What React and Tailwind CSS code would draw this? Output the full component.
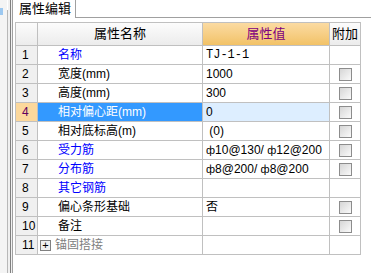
import React from "react";

const FONT = { fontFamily: '"Liberation Sans", "Noto Sans CJK SC", sans-serif' };

const rows = [
  { no: "1", name: "名称", color: "text-[#0000ff]", value: "TJ-1-1", check: false, mono: true },
  { no: "2", name: "宽度(mm)", color: "text-black", value: "1000", check: true },
  { no: "3", name: "高度(mm)", color: "text-black", value: "300", check: true },
  { no: "4", name: "相对偏心距(mm)", color: "text-white", value: "0", check: true, selected: true },
  { no: "5", name: "相对底标高(m)", color: "text-black", value: " (0)", check: true },
  { no: "6", name: "受力筋", color: "text-[#0000ff]", value: "⏀10@130/ ⏀12@200", check: true, bar: true },
  { no: "7", name: "分布筋", color: "text-[#0000ff]", value: "⏀8@200/ ⏀8@200", check: true, bar: true },
  { no: "8", name: "其它钢筋", color: "text-[#0000ff]", value: "", check: false },
  { no: "9", name: "偏心条形基础", color: "text-black", value: "否", check: true },
  { no: "10", name: "备注", color: "text-black", value: "", check: true },
  { no: "11", name: "锚固搭接", color: "text-[#808080]", value: "", check: false, plus: true },
];

function Checkbox() {
  return (
    <div className="w-[13px] h-[13px] border border-[#8c8c8c] bg-gradient-to-br from-[#d6d6d6] to-[#fafafa]" />
  );
}

// bar symbol used for rebar grade
function BarValue({ text }) {
  const parts = text.split("⏀");
  return (
    <span>
      {parts.map((p, i) => (
        <React.Fragment key={i}>
          {i > 0 && <span className="text-[11px]">ф</span>}
          {p}
        </React.Fragment>
      ))}
    </span>
  );
}

const Row = ({ r }) => {
  return (
    <div className="flex h-[19px] text-[12px] leading-[18px]">
      <div
        className={`w-[22px] border-r border-b border-[#c0c0c0] pl-[6px] ${
          r.selected ? "bg-[#fcd89c] text-[#600060]" : "bg-[#f0f0f0] text-black"
        }`}
      >
        {r.no}
      </div>
      <div
        className={`w-[165px] border-r border-b border-[#c0c0c0] flex items-center ${
          r.selected ? "bg-[#3399ff]" : "bg-white"
        } ${r.plus ? "pl-[2px]" : "pl-[20px]"}`}
      >
        {r.plus && (
          <div className="w-[11px] h-[11px] border border-[#808080] bg-[#f0f0f0] flex items-center justify-center mr-[4px] text-[11px] leading-none">
            +
          </div>
        )}
        <span className={r.color}>{r.name}</span>
      </div>
      <div
        className={`w-[127px] border-r border-b border-[#c0c0c0] pl-[3px] whitespace-pre text-black ${
          r.selected ? "bg-[#ddeeff]" : "bg-white"
        }`}
        style={r.mono ? { fontFamily: '"Liberation Mono", monospace' } : undefined}
      >
        {r.bar ? <BarValue text={r.value} /> : r.value}
      </div>
      <div className="w-[31px] border-r border-b border-[#c0c0c0] bg-white flex items-center justify-center">
        {r.check && <Checkbox />}
      </div>
    </div>
  );
};

export default function App() {
  return (
    <div className="w-[371px] h-[273px] bg-white flex overflow-hidden" style={FONT}>
      {/* left frame strip */}
      <div className="flex h-full">
        <div className="w-[7px] bg-[#f4f4f4] relative">
          <div className="absolute left-0 top-[8px] w-[3px] h-[7px] bg-[#9cc8f0]" />
        </div>
        <div className="w-[1px] bg-[#b8b8b8] mt-[10px]" />
        <div className="w-[2px] bg-[#f0f0f0]" />
        <div className="w-[1px] bg-[#808080]" />
        <div className="w-[1px] bg-[#f0f0f0]" />
        <div className="w-[1px] bg-[#a0a0a0]" />
        <div className="w-[2px] bg-white" />
      </div>

      <div className="flex-1 flex flex-col">
        {/* tab bar */}
        <div className="flex h-[18px]">
          <div className="w-[61px] border-r border-[#a0a0a0] bg-white pl-[4px] text-[13px] leading-[17px] text-black">
            属性编辑
          </div>
          <div className="flex-1 border-b border-[#a0a0a0]" />
        </div>

        {/* property grid */}
        <div className="pt-[4px]">
          <div className="border-l border-t border-[#c0c0c0] w-[346px]">
            <div className="flex h-[23px] text-[13px] leading-[22px]">
              <div className="w-[22px] border-r border-b border-[#c0c0c0] bg-gradient-to-b from-[#fcfcfc] to-[#ececec]" />
              <div className="w-[165px] border-r border-b border-[#c0c0c0] bg-gradient-to-b from-[#fcfcfc] to-[#ececec] text-center text-black">
                属性名称
              </div>
              <div className="w-[127px] border-r border-b border-[#c0c0c0] bg-gradient-to-b from-[#fbdba2] to-[#f2c266] text-center text-[#800080]">
                属性值
              </div>
              <div className="w-[31px] border-r border-b border-[#c0c0c0] bg-gradient-to-b from-[#fcfcfc] to-[#ececec] text-center text-black">
                附加
              </div>
            </div>
            {rows.map((r) => (
              <Row key={r.no} r={r} />
            ))}
          </div>
        </div>
      </div>
    </div>
  );
}
